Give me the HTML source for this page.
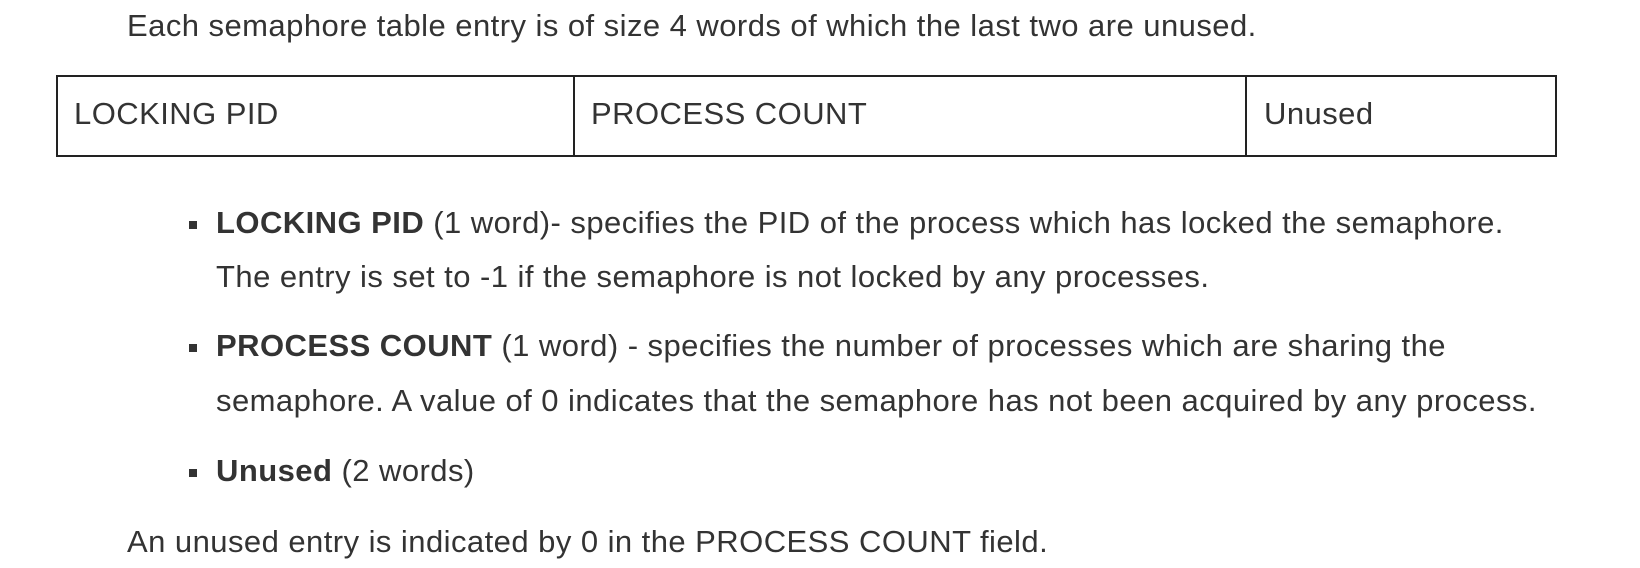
<!DOCTYPE html>
<html><head><meta charset="utf-8"><style>
html,body{margin:0;padding:0;background:#fff;width:1640px;height:568px;overflow:hidden}
body{font-family:"Liberation Sans",Arial,sans-serif;font-size:31px;letter-spacing:0.45px;color:#333;position:relative}
.l{position:absolute;height:40px;line-height:40px;white-space:nowrap}
.tbl{position:absolute;left:56px;top:75px;width:1497px;height:78px;border:2px solid #222}
.v{position:absolute;top:0;bottom:0;width:2px;background:#222}
.sq{position:absolute;width:8px;height:8px;background:#333}
b{font-weight:bold}
</style></head><body>
<div class="l" style="left:127px;top:6px">Each semaphore table entry is of size 4 words of which the last two are unused.</div>
<div class="tbl">
<div class="v" style="left:515px"></div>
<div class="v" style="left:1187px"></div>
</div>
<div class="l" style="left:74px;top:94px">LOCKING PID</div>
<div class="l" style="left:591px;top:94px">PROCESS COUNT</div>
<div class="l" style="left:1264px;top:94px">Unused</div>

<div class="sq" style="left:189px;top:221px"></div>
<div class="l" style="left:216px;top:203px"><b>LOCKING PID</b> (1 word)- specifies the PID of the process which has locked the semaphore.</div>
<div class="l" style="left:216px;top:257px">The entry is set to -1 if the semaphore is not locked by any processes.</div>
<div class="sq" style="left:189px;top:344px"></div>
<div class="l" style="left:216px;top:326px"><b>PROCESS COUNT</b> (1 word) - specifies the number of processes which are sharing the</div>
<div class="l" style="left:216px;top:381px">semaphore. A value of 0 indicates that the semaphore has not been acquired by any process.</div>
<div class="sq" style="left:189px;top:469px"></div>
<div class="l" style="left:216px;top:451px"><b>Unused</b> (2 words)</div>
<div class="l" style="left:127px;top:522px">An unused entry is indicated by 0 in the PROCESS COUNT field.</div>
</body></html>
